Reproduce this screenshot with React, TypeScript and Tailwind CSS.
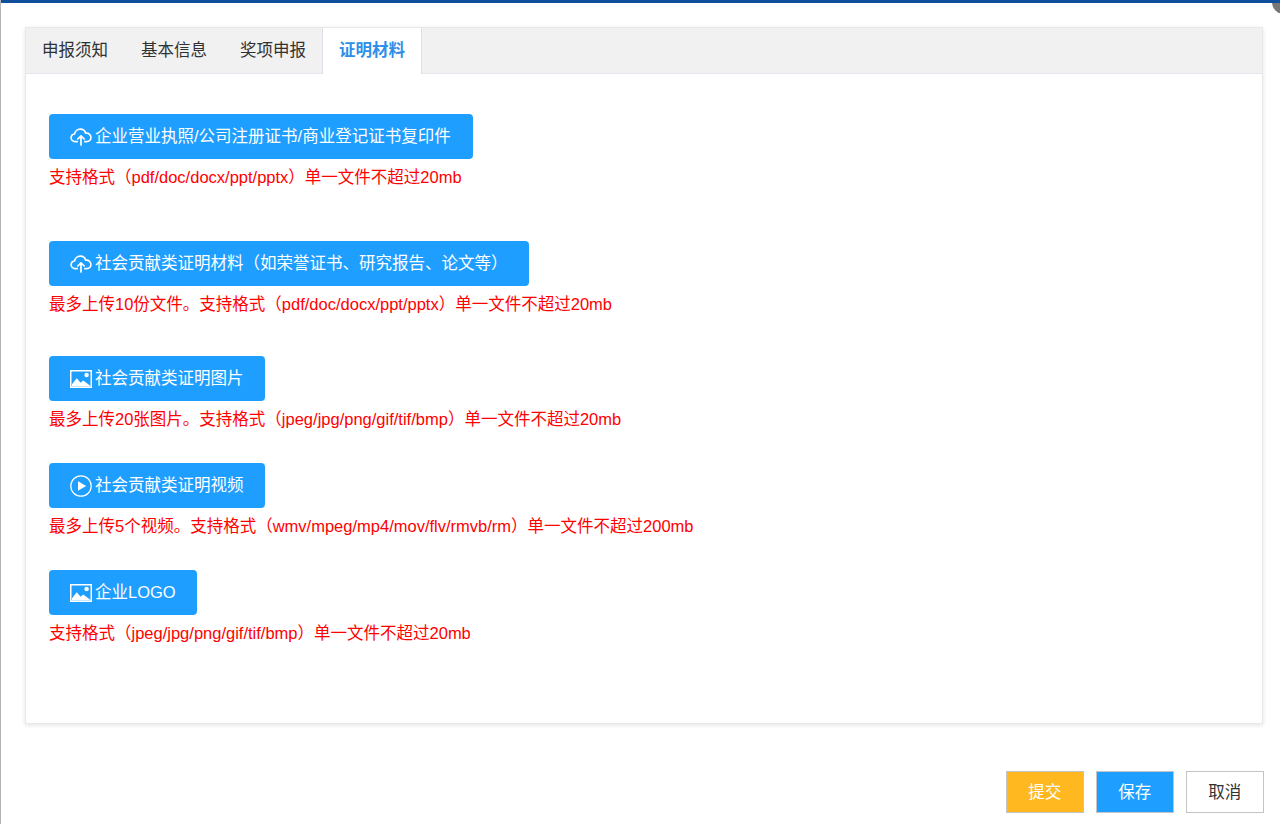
import React from "react";

const CloudIcon = () => (
  <svg width="22" height="18" viewBox="0 0 22 18" fill="none" stroke="white" strokeWidth="1.7" strokeLinecap="round" strokeLinejoin="round" className="shrink-0">
    <path d="M7.2 13.6H5A3.9 3.9 0 0 1 1.1 9.8 3.9 3.9 0 0 1 4.6 6 5.6 5.6 0 0 1 10.2 1.2 5.6 5.6 0 0 1 15.7 5.2 4.3 4.3 0 0 1 20.9 9.4 4.2 4.2 0 0 1 16.8 13.6H14.8" />
    <path d="M11 17V8M7.8 11 11 7.8l3.2 3.2" />
  </svg>
);

const ImageIcon = () => (
  <svg width="22" height="18" viewBox="0 0 22 18" className="shrink-0">
    <path fillRule="evenodd" fill="white" d="M0 0h22v18H0zM1.5 1.5v15h19v-15z" />
    <circle cx="16.6" cy="5" r="2.2" fill="white" />
    <path fill="white" d="M2 16.5v-2.2l4.8-6 3.8 4.4 2.6-2.2 6.8 5v1z" />
  </svg>
);

const PlayIcon = () => (
  <svg width="22" height="22" viewBox="0 0 22 22" className="shrink-0">
    <circle cx="11" cy="11" r="10.2" fill="none" stroke="white" strokeWidth="1.2" />
    <path fill="white" d="M8 6.2 16.2 11 8 15.8z" />
  </svg>
);

type Item = { icon: React.ReactNode; label: string; note: string; width: string; spacing: string };

const items: Item[] = [
  { icon: <CloudIcon />, label: "企业营业执照/公司注册证书/商业登记证书复印件", note: "支持格式（pdf/doc/docx/ppt/pptx）单一文件不超过20mb", width: "w-[424px]", spacing: "mb-[52px]" },
  { icon: <CloudIcon />, label: "社会贡献类证明材料（如荣誉证书、研究报告、论文等）", note: "最多上传10份文件。支持格式（pdf/doc/docx/ppt/pptx）单一文件不超过20mb", width: "w-[480px]", spacing: "mb-[40px]" },
  { icon: <ImageIcon />, label: "社会贡献类证明图片", note: "最多上传20张图片。支持格式（jpeg/jpg/png/gif/tif/bmp）单一文件不超过20mb", width: "w-[216px]", spacing: "mb-[32px]" },
  { icon: <PlayIcon />, label: "社会贡献类证明视频", note: "最多上传5个视频。支持格式（wmv/mpeg/mp4/mov/flv/rmvb/rm）单一文件不超过200mb", width: "w-[216px]", spacing: "mb-[32px]" },
  { icon: <ImageIcon />, label: "企业LOGO", note: "支持格式（jpeg/jpg/png/gif/tif/bmp）单一文件不超过20mb", width: "w-[148px]", spacing: "mb-0" },
];

const tabs = ["申报须知", "基本信息", "奖项申报"];

export default function App() {
  return (
    <div className="relative h-[824px] w-[1280px] overflow-hidden border-l border-[#b4b4b4] bg-white font-['Liberation_Sans','Noto_Sans_CJK_SC',sans-serif] text-[16.5px]">
      <div className="absolute left-[1271px] top-[-10px] h-[24px] w-[24px] rounded-full bg-[#777]" />
      <div className="relative h-[3px] bg-[#0f4f9c]" />

      <div className="ml-[24px] mt-[24px] h-[697px] w-[1238px] border border-[#e8e8e8] bg-white shadow-[0_2px_4px_0_rgba(0,0,0,0.07),0_0_6px_0_rgba(0,0,0,0.04)]">
        <div className="flex h-[46px] border-b border-[#e4e7ed] bg-[#f1f1f1]">
          {tabs.map((t) => (
            <div key={t} className="flex items-center pl-[16px] pr-[17px] text-[#303133]">{t}</div>
          ))}
          <div className="-mb-px -ml-px flex h-[46px] items-center border-x border-[#dcdfe6] bg-white pb-px pl-[16px] pr-[16px] font-bold text-[#2e8fe8]">证明材料</div>
        </div>

        <div className="pl-[23px] pt-[40px]">
          {items.map((it) => (
            <div key={it.label} className={it.spacing}>
              <div className={`flex h-[45px] items-center gap-[3px] rounded-[4px] bg-[#1e9eff] pl-[21px] text-white ${it.width}`}>
                {it.icon}
                <span className="whitespace-nowrap">{it.label}</span>
              </div>
              <div className="mt-[7px] h-[23px] whitespace-nowrap leading-[22px] text-[#ff0000]">{it.note}</div>
            </div>
          ))}
        </div>
      </div>

      <div className="mt-[47px] flex w-[1262.5px] justify-end gap-[12.5px]">
        <button className="h-[42px] w-[77.5px] border border-[#c4c4c4] bg-[#ffb81f] text-white">提交</button>
        <button className="h-[42px] w-[77.5px] border border-[#c4c4c4] bg-[#1e9eff] text-white">保存</button>
        <button className="h-[42px] w-[77.5px] border border-[#c4c4c4] bg-white text-[#303133]">取消</button>
      </div>
    </div>
  );
}
